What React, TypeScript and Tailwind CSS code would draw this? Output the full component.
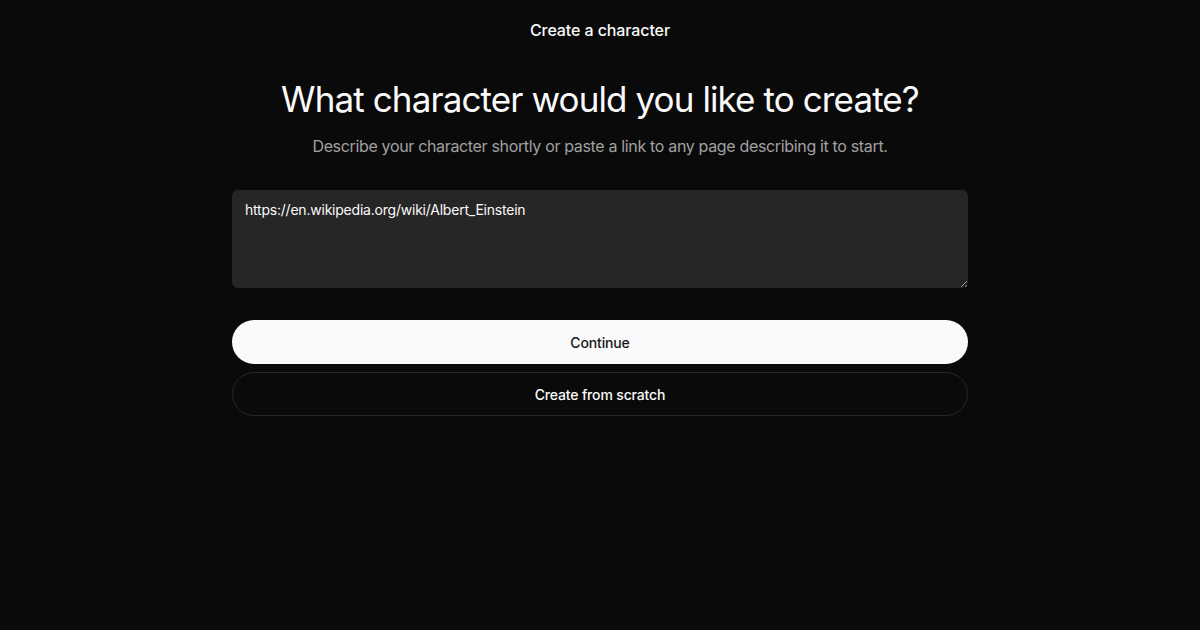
export default function App() {
  return (
    <div className="min-h-[630px] w-full bg-[#0a0a0a] text-white font-['Inter',sans-serif]">
      <div className="flex flex-col items-center">
        <div className="pt-[19px] h-[60px] text-[16px] font-medium leading-[22px] tracking-[-0.1px] text-[#fafafa]">
          Create a character
        </div>
        <h1 className="mt-[19px] text-[35px] leading-[40px] font-normal tracking-[-0.9px] text-[#fafafa]">
          What character would you like to create?
        </h1>
        <p className="mt-[15px] text-[16px] leading-[24px] tracking-[-0.34px] text-[#a1a1a1]">
          Describe your character shortly or paste a link to any page describing it to start.
        </p>
        <div className="mt-[32px] w-[736px] flex flex-col">
          <textarea
            className="h-[98px] w-full rounded-[6px] bg-[#262626] px-[13px] py-[10px] text-[14px] leading-[20px] tracking-[-0.22px] text-[#fafafa] outline-none"
            defaultValue="https://en.wikipedia.org/wiki/Albert_Einstein"
          />
          <button className="mt-[32px] h-[44px] w-full rounded-full bg-[#fafafa] text-[14px] font-medium tracking-[-0.15px] text-[#171717]">
            Continue
          </button>
          <button className="mt-[8px] h-[44px] w-full rounded-full border border-[#262626] bg-[#0a0a0a] text-[14px] font-medium tracking-[-0.15px] text-[#fafafa]">
            Create from scratch
          </button>
        </div>
      </div>
    </div>
  );
}
